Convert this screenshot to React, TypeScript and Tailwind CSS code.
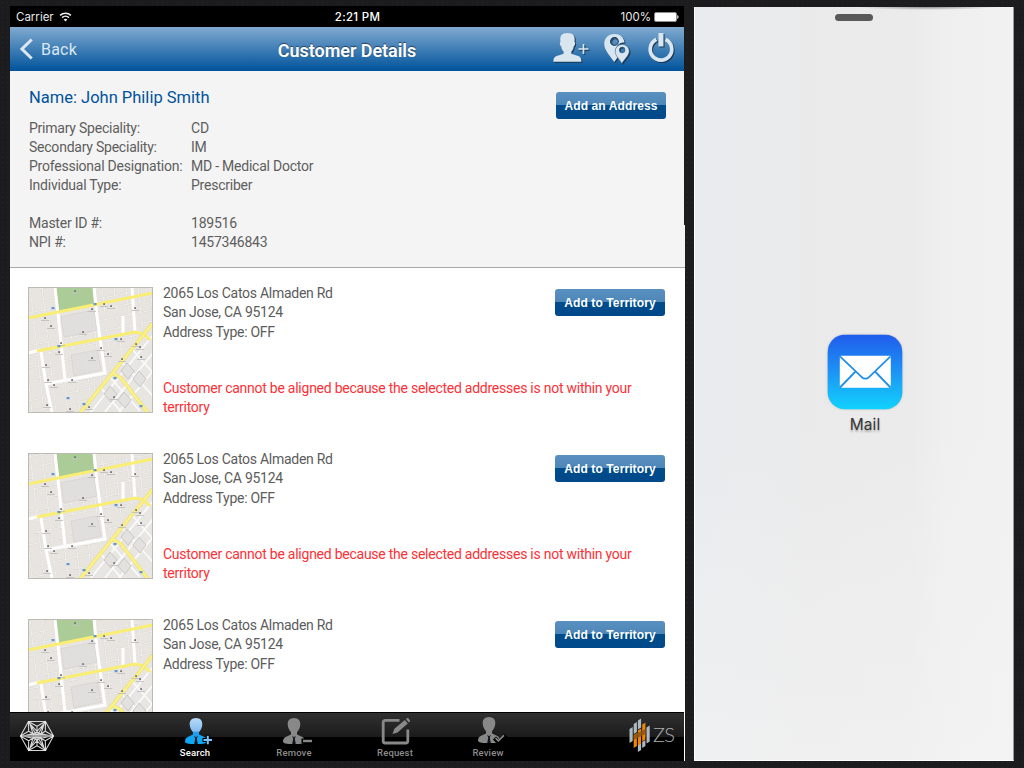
import React from "react";

const ADDRESSES = [
  { id: 1, note: true },
  { id: 2, note: true },
  { id: 3, note: false },
];

const DETAILS = [
  ["Primary Speciality:", "CD"],
  ["Secondary Speciality:", "IM"],
  ["Professional Designation:", "MD - Medical Doctor"],
  ["Individual Type:", "Prescriber"],
  ["", ""],
  ["Master ID #:", "189516"],
  ["NPI #:", "1457346843"],
];

function StatusBar() {
  return (
    <div className="grid h-[21px] grid-cols-3 items-center bg-black pt-px pr-[5px] pl-1.5 font-[Inter,sans-serif] text-[11.5px] leading-[20px] text-[#e8e8e8]">
      <div className="flex items-center gap-[5px]">
        <span>Carrier</span>
        <svg width="13" height="10" viewBox="0 0 12 10" fill="none" stroke="#f0f0f0" strokeWidth="1.5">
          <path d="M.6 3.4a7.8 7.8 0 0 1 10.8 0M2.6 5.6a4.9 4.9 0 0 1 6.8 0" />
          <path d="M6 9.4 4.2 7.5a2.6 2.6 0 0 1 3.6 0z" fill="#f0f0f0" stroke="none" />
        </svg>
      </div>
      <div className="pl-5 text-center font-medium tracking-[0.3px] text-white">2:21 PM</div>
      <div className="flex items-center justify-end gap-[3px]">
        <span>100%</span>
        <svg width="25" height="10" viewBox="0 0 25 10">
          <rect x=".5" y=".5" width="22" height="9" rx="1.5" fill="#fff" stroke="#8c8c8c" />
          <path d="M23.3 3v4q1.3-.6 1.3-2t-1.3-2" fill="#fff" />
        </svg>
      </div>
    </div>
  );
}

function NavBar() {
  return (
    <div className="flex h-[44px] items-start bg-[linear-gradient(#80aad0,#00539b)]">
      <div className="flex h-[44px] w-[200px] items-center gap-2 pl-[10px]">
        <svg width="13" height="22" viewBox="0 0 13 22" fill="none" stroke="#d9e7f0" strokeWidth="3">
          <path d="M11.7 1.5 2 11l9.7 9.500" />
        </svg>
        <span className="pt-[2px] text-[16px] tracking-[0.2px] text-[#d9e7f0]">Back</span>
      </div>
      <div className="w-[274px] pt-[1px] text-center text-[18px] leading-[46px] font-semibold tracking-[-0.05px] text-white [text-shadow:0_-1px_1px_#26415c]">
        Customer Details
      </div>
      <div className="flex h-[44px] flex-1 justify-end pr-2">
        <svg width="124" height="44" viewBox="0 0 124 44" className="[filter:drop-shadow(1px_1px_0.5px_#173550)]">
          <path
            fill="#d9e6ef"
            d="M1.400 34.800c0-4.200 1.300-5.500 5-6.400l5.200-1.600v-2.200c-1.600-1.500-2.100-3.300-2.300-5.200-1.600-.8-1.800-4-.8-4.500C7.500 9.300 9.500 6 15.500 6s8 3.300 7 8.900c1 .5.8 3.700-.8 4.500-.2 1.900-.8 3.700-2.300 5.200v2.200l5.200 1.600c3.700.9 4.800 2.200 4.800 6.400z"
          />
          <path d="M31.500 16.900v10M26.500 22h10" stroke="#d9e6ef" strokeWidth="1.700" fill="none" />
          <path
            fill="#d9e6ef"
            fillRule="evenodd"
            d="M62.500 7C56 7 52 11.500 52.300 17.200c.2 5.800 4.700 10.500 10 17.900l3.600-5c-3-5.500-3-8-.5-11.500 1.900-2.400 4.300-3.400 7.200-3.100C71.900 10.300 68 7 62.500 7zm0 3.100a4.400 4.400 0 1 1 0 8.800 4.400 4.400 0 0 1 0-8.800z"
          />
          <circle cx="62.500" cy="14.500" r="3.800" fill="none" stroke="#24476b" strokeWidth=".8" />
          <path
            fill="#d9e6ef"
            fillRule="evenodd"
            d="M70.200 17.500c-4.100 0-7 3-7 6.800 0 3.800 3.300 7.200 6.700 12.100 3.200-4.900 7.300-8.300 7.300-12.100s-2.900-6.800-7-6.800zm0 2.600a2.900 2.900 0 1 1 0 5.800 2.900 2.900 0 0 1 0-5.800z"
            stroke="#40698e"
            strokeWidth=".6"
          />
          <path d="M104.400 12.500a10.800 10.800 0 1 0 9.200 0" fill="none" stroke="#d9e6ef" strokeWidth="3.700" />
          <path d="M109 6v13.500" stroke="#d9e6ef" strokeWidth="5" />
        </svg>
      </div>
    </div>
  );
}

function GlossButton({ children }: { children: React.ReactNode }) {
  return (
    <button className="h-[27px] w-[110px] shrink-0 rounded-[3px] bg-[linear-gradient(#5990c0_0,#4d86b8_13px,#004d8b_13px,#00488a_100%)] pt-px text-center font-['Liberation_Sans',Arial,sans-serif] text-[12px] leading-[26px] font-bold tracking-[0.1px] whitespace-nowrap text-white">
      {children}
    </button>
  );
}

function MapThumb() {
  const minor = [];
  for (let i = -4; i < 16; i++) {
    minor.push(`M0 ${i * 11 + 15}L125 ${i * 11 - 10}`);
    minor.push(`M${i * 12 + 2} 0l14 125`);
  }
  const dots = [[17, 31], [76, 17], [64, 22], [83, 19], [107, 21], [47, 4], [23, 39], [55, 45], [73, 61], [80, 67], [94, 72], [64, 71], [33, 56], [108, 57], [112, 60], [18, 78], [20, 93], [44, 93], [26, 98], [19, 118], [42, 122], [61, 120], [86, 110], [113, 70], [31, 65], [93, 52]];
  const pins = [[25, 21], [67, 17], [31, 59], [88, 52], [40, 111], [56, 117], [87, 91], [113, 119]];
  return (
    <svg width="125" height="126" viewBox="0 0 125 126" className="shrink-0">
      <defs>
        <clipPath id="diagonal-quarter">
          <path d="M125 36 52 126h73z" />
        </clipPath>
      </defs>
      <rect width="125" height="126" fill="#e8e5e1" />
      <path d={minor.join("")} stroke="#dcd9d5" strokeWidth="1.800" fill="none" />
      <path d={minor.join("")} stroke="#f0eeeb" strokeWidth="1" fill="none" />
      <path d="M33 30l33-7 3 20-33 7zM43 68l26-5 4 20-27 6z" fill="#dedddc" fillOpacity=".7" stroke="#d2cfcc" strokeWidth=".6" />
      <g clipPath="url(#diagonal-quarter)">
        <rect width="125" height="126" fill="#e8e6e3" />
        <path d="M125 48 62 126M125 66 76 126M125 84 90 126M80 88l32 36M92 73l33 36M103 61l22 25M72 100l22 26" stroke="#fafafa" strokeWidth="1.800" fill="none" />
        <path d="M99 76l7 8-6 8-7-8zM111 84l7 8-6 8-7-8zM82 99l7 8-6 8-7-8zM96 105l7 8-6 8-7-8z" fill="#e3e1de" stroke="#c6c3c0" strokeWidth=".9" />
      </g>
      <path d="M28 0h37l1 17-36 8z" fill="#abcc97" />
      <path
        d="M27 0l3 27 7 66M66 0l3 30 8 56-60 11M104 0l3 45M95 29v17M13 65l5 32 6 28M0 66l12-3"
        stroke="#fff"
        strokeWidth="3"
        fill="none"
      />
      <path d="M0 31 125 6M9 64l98-19 9 2 6 6" stroke="#f9ee72" strokeWidth="3" fill="none" />
      <path d="M125 36 52 126M84 86l9 5 27 35" stroke="#eadf78" strokeWidth="3.600" fill="none" />
      <path d="M125 36 52 126M84 86l9 5 27 35" stroke="#fbf184" strokeWidth="2.400" fill="none" />
      {dots.map(([x, y]) => (
        <g key={`${x}-${y}`}>
          <rect x={x - 0.8} y={y - 0.8} width="1.800" height="1.800" fill="#77747c" />
          <path d={`M${x - 4} ${y + 2.5}h8`} stroke="#c2bfbd" strokeWidth=".9" />
        </g>
      ))}
      {pins.map(([x, y]) => (
        <rect key={`${x}-${y}`} x={x - 1.5} y={y - 1} width="3" height="2.200" fill="#6596cd" />
      ))}
      <rect x=".5" y=".5" width="124" height="125" fill="none" stroke="#bdbab4" />
    </svg>
  );
}

function AddressRow({ note }: { note: boolean }) {
  return (
    <div className="flex h-[166px] shrink-0 pl-[18px]">
      <MapThumb />
      <div className="w-[512px] pl-[10px] text-[14px] text-[#5c5c5c]">
        <div className="flex h-[92px] items-start justify-between">
          <div className="-mt-[3px] tracking-[-0.27px]">
            <p className="h-[19px] leading-[19px]">2065 Los Catos Almaden Rd</p>
            <p className="h-[20px] leading-[19px]">San Jose, CA 95124</p>
            <p className="h-[19px] leading-[19px]">Address Type: OFF</p>
          </div>
          <div className="pt-[2px]">
            <GlossButton>Add to Territory</GlossButton>
          </div>
        </div>
        {note && (
          <p className="leading-[19px] tracking-[-0.25px] text-[#ff2f36]">
            Customer cannot be aligned because the selected addresses is not within your
            <br />
            territory
          </p>
        )}
      </div>
    </div>
  );
}

function HexLogo() {
  const v = [[16.5, 0], [8.5, 14.5], [-8.5, 14.5], [-16.5, 0], [-8.5, -14.5], [8.5, -14.5]];
  let d = "";
  v.forEach(([x, y], i) => {
    const [a, b] = v[(i + 1) % 6];
    const cx = (x + a) / 3;
    const cy = (y + b) / 3;
    d += `M0 0L${x} ${y}L${a} ${b}M${cx} ${cy}L0 0M${cx} ${cy}L${x} ${y}M${cx} ${cy}L${a} ${b}`;
    d += `M${x * 0.85} ${y * 0.85}L${a * 0.2} ${b * 0.2}M${a * 0.85} ${b * 0.85}L${x * 0.2} ${y * 0.2}`;
  });
  return (
    <svg width="34" height="32" viewBox="-17 -16 34 32" fill="none">
      <path d={d} stroke="#d4d4d4" strokeWidth="1.100" />
      <path d="M-16 0H16" stroke="#999" strokeWidth="1.600" />
      {v.map(([x, y]) => (
        <circle key={`${x},${y}`} cx={x * 0.95} cy={y * 0.95} r="1.100" fill="#eee" />
      ))}
    </svg>
  );
}

function PersonIcon({ kind }: { kind: "add" | "remove" | "check" }) {
  const fill = kind === "add" ? "url(#person-blue)" : "#888";
  return (
    <svg width="32" height="30" viewBox="0 0 32 30">
      <defs>
        <linearGradient id="person-blue" x1="0" y1="1" x2="0" y2="27" gradientUnits="userSpaceOnUse">
          <stop offset="0" stopColor="#b7daf6" />
          <stop offset=".5" stopColor="#86bdf0" />
          <stop offset=".55" stopColor="#1d9ff0" />
          <stop offset="1" stopColor="#0aa9f4" />
        </linearGradient>
      </defs>
      <path
        fill={fill}
        d="M13 1c4.200 0 6.600 2.800 6.300 6.500-.2 3.500-1.800 6.200-3.300 7.700v2.300l5.400 2.400c1.700.8 2.600 2.200 2.600 5.200-1.300 1.400-3.400 1.900-5.700 1.900H7.700C5.300 27 3.200 26.500 2 25.100c0-3 .9-4.400 2.600-5.200l5.400-2.400v-2.300c-1.500-1.500-3.100-4.200-3.300-7.700C6.400 3.800 8.800 1 13 1z"
      />
      <path d="M11.200 18.800l1.800 1.500 1.800-1.500-1 3 1 5.200h-3.600l1-5.200z" fill="#10161c" />
      {kind === "add" && <path d="M19.500 23h10.500M24.800 17.700v10.500" stroke="#000" strokeWidth="4" />}
      {kind === "add" && <path d="M20.500 23h8.500M24.800 18.700v8.500" stroke="#7cc4f5" strokeWidth="2" />}
      {kind === "remove" && <path d="M20.500 24h10" stroke="#000" strokeWidth="5" />}
      {kind === "remove" && <path d="M22 24h9" stroke="#888" strokeWidth="2.400" />}
      {kind === "check" && <path d="M18.500 22l4.500 4.500 7-7" stroke="#000" strokeWidth="4.500" fill="none" />}
      {kind === "check" && <path d="M19.500 22l2.800 2.800 5.700-5.500" stroke="#888" strokeWidth="1.600" fill="none" />}
    </svg>
  );
}

function RequestIcon() {
  return (
    <svg width="32" height="30" viewBox="0 0 32 30" fill="none">
      <path d="M20.500 3.400H6.200A2 2 0 0 0 4.200 5.400v18.600a2 2 0 0 0 2 2h20.600a2 2 0 0 0 2-2V12.500" stroke="#888" strokeWidth="2.800" />
      <path d="M13.500 17l1.900-5.200L25.800 3l3 3.600-10.300 8.800zM26.900 2.100l1-.9c.5-.4 1-.3 1.400.1l1.600 2c.3.500.3 1-.2 1.400l-1 .8z" fill="#888" />
    </svg>
  );
}

function Tab({ label, active, className, children }: { label: string; active?: boolean; className: string; children: React.ReactNode }) {
  return (
    <div className={`flex shrink-0 flex-col items-center pt-1 ${className}`}>
      {children}
      <span className={`-mt-[1px] text-[9.5px] leading-[13px] font-medium tracking-[0.15px] ${active ? "text-white" : "text-[#8c8c8c]"}`}>{label}</span>
    </div>
  );
}

function ZsLogo() {
  return (
    <div className="flex items-center gap-[2px]">
      <svg width="22" height="36" viewBox="0 0 22 36">
        <path d="M.5 11 3.700 9v14L.5 25zM4.700 6l3.200-2v10l-3.200 2zM8.900 2.500l3.200-2v9l-3.200 2zM17.500 9.500l3.200-2v16l-3.200 2zM8.900 27l3.200-2v7l-3.200 2zM13.200 24l3.200-2v6l-3.200 2z" fill="#aebbc3" />
        <path d="M4.700 17l3.200-2v13l-3.200 2zM8.900 12.500l3.200-2v15l-3.200 2zM13.200 6.500l3.200-2v17l-3.200 2z" fill="#ed8606" />
        <path d="M4.700 17l11.700-6v5L4.700 22z" fill="#8d5412" opacity=".85" />
      </svg>
      <span className="-mt-[4px] font-[Lato,sans-serif] text-[20px] leading-[24px] font-light tracking-[-0.8px] text-[#b0b0b0]">ZS</span>
    </div>
  );
}

function TabBar() {
  return (
    <div className="flex h-[49px] w-[675px] shrink-0 border-r border-r-white bg-[linear-gradient(#000_1px,#303030_1px,#1b1b1b_25px,#000_25px,#000_100%)]">
      <div className="w-[159px] pt-[8px] pl-[10px]">
        <HexLogo />
      </div>
      <Tab label="Search" active className="w-[52px]">
        <div className="mt-px pl-[8px]"><PersonIcon kind="add" /></div>
      </Tab>
      <Tab label="Remove" className="ml-[46px] w-[54px]">
        <div className="mt-px pl-[6px]"><PersonIcon kind="remove" /></div>
      </Tab>
      <Tab label="Request" className="ml-[47px] w-[54px]">
        <div className="mt-px"><RequestIcon /></div>
      </Tab>
      <Tab label="Review" className="ml-[39px] w-[54px]">
        <div className="mb-[1px] pl-[7px]"><PersonIcon kind="check" /></div>
      </Tab>
      <div className="flex-1 pt-[6px] pl-[114px]">
        <ZsLogo />
      </div>
    </div>
  );
}

function MailPane() {
  return (
    <div className="mt-[1px] h-[754px] w-[320px] border-r border-b border-l border-r-[#999] border-b-white border-l-white bg-[radial-gradient(ellipse_70px_3px_at_73%_0,#55555599,transparent),linear-gradient(#ffffff00_55%,#f5f5f580_100%),linear-gradient(90deg,#e8ebee_0,#e9ebec_18%,#eaeaeb_35%,#ebebeb_68%,#efeff0_78%,#f1f1f2_100%)]">
      <div className="flex flex-col items-center pt-[7px] pr-[1px]">
        <div className="h-[7px] w-[38px] rounded-full bg-[#595959]" />
      </div>
      <div className="flex flex-col items-center pt-[313px] pl-[22px]">
        <svg width="76" height="76" viewBox="0 0 76 76" className="[filter:drop-shadow(0_0_1px_#bbb)]">
          <defs>
            <linearGradient id="mail-blue" x1="0" y1="0" x2="0" y2="1">
              <stop offset="0" stopColor="#205cec" />
              <stop offset=".5" stopColor="#1d94f5" />
              <stop offset="1" stopColor="#11d2fd" />
            </linearGradient>
          </defs>
          <rect x=".7" y=".7" width="74.600" height="74.600" rx="17" fill="url(#mail-blue)" />
          <rect x="12.800" y="21.800" width="51" height="32" rx="1" fill="#fff" />
          <path d="M13 22.300l21.500 20.500c2.500 2.400 5.300 2.400 7.800 0L63.500 22.300M13 53.500l15.500-16M63.500 53.500 48 37.500" stroke="#2290e8" strokeWidth="1.800" fill="none" />
        </svg>
        <span className="mt-[3px] font-[Inter,sans-serif] text-[15.5px] leading-[24px] tracking-[0.1px] text-[#373737] [text-shadow:0_2px_2px_#aaa]">Mail</span>
      </div>
    </div>
  );
}

export default function App() {
  return (
    <div className="flex h-[768px] w-[1024px] gap-[9px] overflow-hidden bg-[#1c1b1e] bg-[radial-gradient(#26252a_0.7px,transparent_0.9px)] bg-size-[5px_5px] pt-1.5 pl-[10px] font-[Roboto,sans-serif]">
      <div className="flex h-[755px] w-[675px] flex-col">
        <div className="w-[674px] shrink-0">
          <StatusBar />
          <NavBar />
        </div>
        <div className="flex h-[197px] shrink-0 justify-between border-b border-[#a9a9a9] bg-[#f4f4f4] bg-[linear-gradient(#1c1b1e,#1c1b1e)] bg-size-[1px_154px] bg-right-top bg-no-repeat pr-[19px] pl-[19px]">
          <div className="pt-[15px]">
            <h1 className="text-[16.5px] leading-[24px] text-[#00539b]">Name: John Philip Smith</h1>
            <dl className="pt-[9px] text-[14px] leading-[19px] text-[#5e5e5e]">
              {DETAILS.map(([k, v], i) => (
                <div key={i} className="flex h-[19px]">
                  <dt className="w-[162px] tracking-[-0.23px]">{k}</dt>
                  <dd className="tracking-[-0.23px]">{v}</dd>
                </div>
              ))}
            </dl>
          </div>
          <div className="pt-[21px]">
            <GlossButton>Add an Address</GlossButton>
          </div>
        </div>
        <div className="flex h-[444px] shrink-0 flex-col overflow-hidden bg-white pt-[19px]">
          {ADDRESSES.map((a) => (
            <AddressRow key={a.id} note={a.note} />
          ))}
        </div>
        <TabBar />
      </div>
      <MailPane />
    </div>
  );
}
